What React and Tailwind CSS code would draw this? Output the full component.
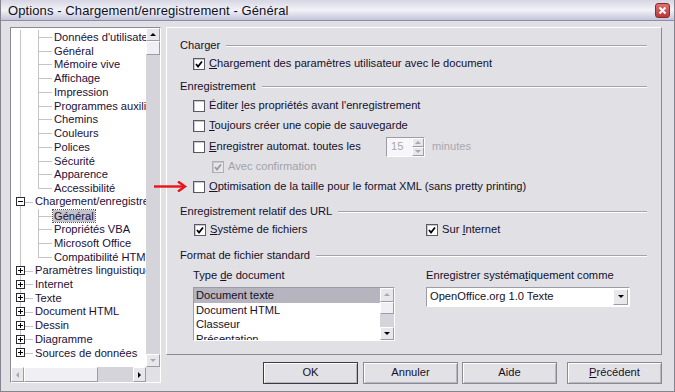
import React from "react";

const FONT = "font-['Liberation_Sans','DejaVu_Sans',sans-serif]";

function Check({ checked, disabled }) {
  return (
    <span
      className={`relative inline-block w-[12px] h-[12px] shrink-0 border ${
        disabled ? "border-[#b0afb8] bg-[#e6e5ea]" : "border-[#5a5a66] bg-white"
      } shadow-[inset_1px_1px_0_#c8c8d0]`}
    >
      {checked && (
        <svg width="10" height="10" viewBox="0 0 10 10" className="absolute left-0 top-0">
          <path
            d="M2 5 L4 7.5 L8 2.5"
            fill="none"
            stroke={disabled ? "#9a99a4" : "#000"}
            strokeWidth="1.8"
          />
        </svg>
      )}
    </span>
  );
}

function CheckRow({ label, checked, disabled, className = "", ul }) {
  return (
    <div className={`flex items-center ${className}`}>
      <Check checked={checked} disabled={disabled} />
      <span className={`ml-[4px] ${disabled ? "text-[#a3a2ab]" : "text-[#14102a]"}`}>
        {ul ? (
          <>
            {label.slice(0, ul[0])}
            <span className="underline">{label.slice(ul[0], ul[1])}</span>
            {label.slice(ul[1])}
          </>
        ) : (
          label
        )}
      </span>
    </div>
  );
}

function GroupHeader({ label, className = "" }) {
  return (
    <div className={`flex items-center h-[14px] pl-[13px] pr-[14px] ${className}`}>
      <span className="text-[#14102a]">{label}</span>
      <span className="flex-1 ml-[6px] h-[2px] border-t border-[#a4a3ad] border-b border-b-white" />
    </div>
  );
}

function Arrow({ dir, disabled }) {
  const c = disabled ? "#a8a8b0" : "#000";
  const p = {
    up: "M1 5 L4 2 L7 5 Z",
    down: "M1 2 L4 5 L7 2 Z",
    left: "M5 1 L2 4 L5 7 Z",
    right: "M2 1 L5 4 L2 7 Z",
  }[dir];
  return (
    <svg width="8" height="8" viewBox="0 0 8 8">
      <path d={p} fill={c} />
    </svg>
  );
}

function SBtn({ dir, disabled, className = "" }) {
  return (
    <div
      className={`flex items-center justify-center bg-[#e8e7ec] border border-t-white border-l-white border-r-[#9d9ca6] border-b-[#9d9ca6] ${className}`}
    >
      <Arrow dir={dir} disabled={disabled} />
    </div>
  );
}

const treeRows = [
  { t: "Données d'utilisateur", l: 2 },
  { t: "Général", l: 2 },
  { t: "Mémoire vive", l: 2 },
  { t: "Affichage", l: 2 },
  { t: "Impression", l: 2 },
  { t: "Programmes auxiliaires", l: 2 },
  { t: "Chemins", l: 2 },
  { t: "Couleurs", l: 2 },
  { t: "Polices", l: 2 },
  { t: "Sécurité", l: 2 },
  { t: "Apparence", l: 2 },
  { t: "Accessibilité", l: 2, last: true },
  { t: "Chargement/enregistrement", l: 1, open: true },
  { t: "Général", l: 2, sel: true },
  { t: "Propriétés VBA", l: 2 },
  { t: "Microsoft Office", l: 2 },
  { t: "Compatibilité HTML", l: 2, last: true },
  { t: "Paramètres linguistiques", l: 1 },
  { t: "Internet", l: 1 },
  { t: "Texte", l: 1 },
  { t: "Document HTML", l: 1 },
  { t: "Dessin", l: 1 },
  { t: "Diagramme", l: 1 },
  { t: "Sources de données", l: 1, lastTop: true },
];

function TreeRow({ r }) {
  return (
    <div className="relative h-[13.75px] flex items-center whitespace-nowrap">
      <span
        className={`absolute left-[9px] w-px bg-[#c4c4cc] top-0 ${
          r.lastTop ? "h-1/2" : "h-full"
        }`}
      />
      {r.l === 2 && (
        <>
          <span
            className={`absolute left-[27px] w-px bg-[#c4c4cc] top-0 ${
              r.last ? "h-1/2" : "h-full"
            }`}
          />
          <span className="absolute left-[27px] top-1/2 w-[14px] h-px bg-[#c4c4cc]" />
          <span
            className={`ml-[42px] leading-[12px] px-[1px] -mx-[1px] ${
              r.sel ? "bg-[#c3c2cb] outline outline-1 outline-dotted outline-[#555]" : ""
            } text-[#1c1038]`}
          >
            {r.t}
          </span>
        </>
      )}
      {r.l === 1 && (
        <>
          <span className="absolute left-[13px] top-1/2 w-[9px] h-px bg-[#c4c4cc]" />
          <span className="absolute left-[5px] top-[2px] w-[9px] h-[9px] border border-[#2a2a30] bg-white flex items-center justify-center">
            <span className="absolute left-[1px] top-[3px] w-[5px] h-px bg-black" />
            {!r.open && <span className="absolute left-[3px] top-[1px] w-px h-[5px] bg-black" />}
          </span>
          <span className="ml-[24px] text-[#1c1038]">{r.t}</span>
        </>
      )}
    </div>
  );
}

function Button({ children, def, className = "" }) {
  return (
    <div
      className={`w-[95px] h-[22px] flex items-center justify-center bg-[#e2e1e6] border ${
        def ? "border-[#3c3c44]" : "border-[#8a8994]"
      } shadow-[inset_1px_1px_0_#ffffff,inset_-1px_-1px_0_#b8b7c0] text-[#14102a] ${className}`}
    >
      {children}
    </div>
  );
}

export default function App() {
  return (
    <div
      className={`relative w-[675px] h-[392px] overflow-hidden bg-[#e1e0e5] ${FONT} text-[11.15px] leading-none border-l border-r border-b border-[#85848e]`}
    >
      {/* Title bar */}
      <div className="h-[21px] flex items-center justify-between pl-[7px] pr-[4px] bg-gradient-to-b from-[#d6d6e4] via-[#f2f2f8] to-[#c4c4da] border-b border-[#8d8ca8]">
        <span className="text-[13px] text-[#101020] tracking-[0.1px]">
          Options - Chargement/enregistrement - Général
        </span>
        <div className="w-[15px] h-[15px] rounded-[3px] bg-gradient-to-b from-[#e07070] to-[#b83838] border border-[#8c2a2a] flex items-center justify-center">
          <svg width="9" height="9" viewBox="0 0 9 9">
            <path d="M1.5 1.5 L7.5 7.5 M7.5 1.5 L1.5 7.5" stroke="#fff" strokeWidth="2" />
          </svg>
        </div>
      </div>

      <div className="flex pt-[6px]">
        {/* Tree panel */}
        <div className="ml-[9px] w-[151px] h-[356px] border border-t-[#8a8994] border-l-[#8a8994] border-r-white border-b-white flex flex-col bg-white">
          <div className="flex h-[339px]">
            <div className="flex-1 flex flex-col overflow-hidden">
              <div className="h-[329px] overflow-hidden pt-[2px]">
                {treeRows.map((r, i) => (
                  <TreeRow key={i} r={r} />
                ))}
              </div>
            </div>
            <div className="w-[14px] flex flex-col bg-[#d5d4da]">
              <SBtn dir="up" className="h-[13px]" />
              <div className="h-[14px] bg-[#f0eff3] border border-t-white border-l-white border-r-[#9d9ca6] border-b-[#9d9ca6]" />
              <div className="flex-1" />
              <SBtn dir="down" disabled className="h-[13px]" />
            </div>
          </div>
          <div className="flex h-[15px] bg-[#d5d4da]">
            <SBtn dir="left" disabled className="w-[13px]" />
            <div className="w-[74px] bg-[#f0eff3] border border-t-white border-l-white border-r-[#9d9ca6] border-b-[#9d9ca6]" />
            <div className="flex-1" />
            <SBtn dir="right" className="w-[13px]" />
            <div className="w-[14px] bg-[#e1e0e5]" />
          </div>
        </div>

        {/* Main panel */}
        <div className="ml-[5px] w-[496px] h-[328px] border border-t-white border-l-white border-r-[#8a8994] border-b-[#8a8994] flex flex-col pt-[11px]">
          <GroupHeader label="Charger" />
          <CheckRow
            className="mt-[4px] h-[14px] pl-[26px]"
            checked
            label="Chargement des paramètres utilisateur avec le document"
            ul={[0, 1]}
          />
          <GroupHeader label="Enregistrement" className="mt-[9px]" />
          <div className="relative pl-[26px]">
            <CheckRow
              className="h-[20px] mt-[2px]"
              label="Éditer les propriétés avant l'enregistrement"
              ul={[7, 8]}
            />
            <CheckRow
              className="h-[20px]"
              label="Toujours créer une copie de sauvegarde"
              ul={[0, 1]}
            />
            <div className="flex items-center h-[20px] mt-[1px]">
              <CheckRow
                className="w-[193px]"
                label="Enregistrer automat. toutes les"
                ul={[0, 1]}
              />
              <div className="flex h-[20px] w-[39px] border border-t-[#9d9ca6] border-l-[#9d9ca6] border-r-white border-b-white bg-[#f7f6f9]">
                <span className="flex-1 flex items-center pl-[4px] text-[#a8a7b0]">15</span>
                <div className="w-[12px] flex flex-col">
                  <SBtn dir="up" disabled className="h-[9px]" />
                  <SBtn dir="down" disabled className="h-[9px]" />
                </div>
              </div>
              <span className="ml-[7px] text-[#a8a7b0]">minutes</span>
            </div>
            <CheckRow
              className="h-[20px] pl-[19px]"
              checked
              disabled
              label="Avec confirmation"
            />
            <CheckRow
              className="h-[20px]"
              label="Optimisation de la taille pour le format XML (sans pretty printing)"
              ul={[0, 1]}
            />
          </div>
          <GroupHeader label="Enregistrement relatif des URL" className="mt-[8px]" />
          <div className="flex items-center h-[14px] mt-[4px] pl-[27px]">
            <CheckRow className="w-[232px]" checked label="Système de fichiers" ul={[0, 1]} />
            <CheckRow checked label="Sur Internet" ul={[4, 5]} />
          </div>
          <GroupHeader label="Format de fichier standard" className="mt-[12px]" />
          <div className="flex pl-[26px] mt-[6px]">
            <div className="flex flex-col w-[233px]">
              <span className="h-[14px] flex items-center text-[#14102a]">
                Type <span className="underline ml-[3px]">d</span>e document
              </span>
              <div className="mt-[4px] w-[202px] h-[54px] flex bg-white border border-t-[#9d9ca6] border-l-[#9d9ca6] border-r-white border-b-white overflow-hidden">
                <div className="flex-1 flex flex-col text-[#14102a] whitespace-nowrap">
                  <div className="h-[15px] shrink-0 bg-[#b6b5bf] flex items-center pl-[2px]">Document texte</div>
                  <div className="h-[15px] shrink-0 flex items-center pl-[2px]">Document HTML</div>
                  <div className="h-[14px] shrink-0 flex items-center pl-[2px]">Classeur</div>
                  <div className="h-[15px] shrink-0 flex items-center pl-[2px]">Présentation</div>
                </div>
                <div className="w-[14px] flex flex-col bg-[#d5d4da]">
                  <SBtn dir="up" disabled className="h-[14px]" />
                  <div className="h-[12px] bg-[#f0eff3] border border-t-white border-l-white border-r-[#9d9ca6] border-b-[#9d9ca6]" />
                  <div className="flex-1" />
                  <SBtn dir="down" className="h-[13px]" />
                </div>
              </div>
            </div>
            <div className="flex flex-col">
              <span className="h-[14px] flex items-center text-[#14102a]">
                Enregistrer systéma<span className="underline">t</span>iquement comme
              </span>
              <div className="mt-[4px] w-[204px] h-[20px] flex items-center bg-white border border-t-[#9d9ca6] border-l-[#9d9ca6] border-r-white border-b-white">
                <span className="flex-1 pl-[3px] text-[#14102a]">OpenOffice.org 1.0 Texte</span>
                <SBtn dir="down" className="w-[15px] h-[16px] mr-[1px]" />
              </div>
            </div>
          </div>
        </div>
      </div>

      {/* Red arrow overlay */}
      <svg className="absolute left-[153px] top-[181px]" width="34" height="11" viewBox="0 0 34 11">
        <path d="M0 5.5 H30" stroke="#e8141c" strokeWidth="2.4" />
        <path d="M24 0.5 L31 5.5 L24 10.5" fill="none" stroke="#e8141c" strokeWidth="2.4" />
      </svg>

      {/* Buttons row */}
      <div className="absolute left-[262px] top-[362px] flex">
        <Button def className="w-[95px]">OK</Button>
        <Button className="ml-[5px]">Annuler</Button>
        <Button className="ml-[4px]">Aide</Button>
        <Button className="ml-[10px]">
          <span className="underline">P</span>récédent
        </Button>
      </div>
    </div>
  );
}
